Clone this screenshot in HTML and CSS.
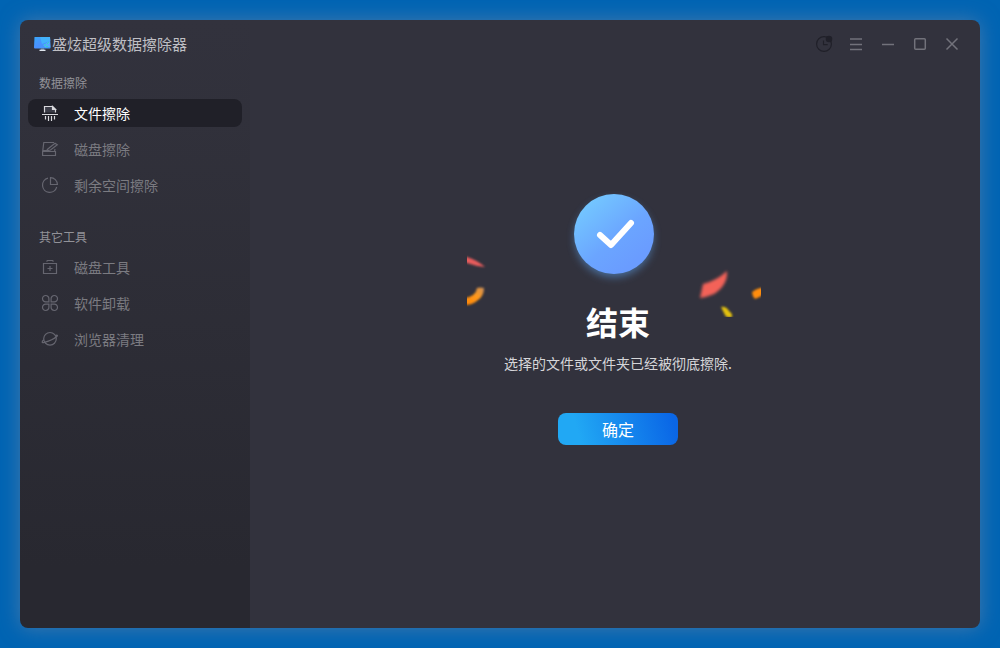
FILE: index.html
```html
<!DOCTYPE html>
<html lang="zh-CN">
<head>
<meta charset="utf-8">
<meta name="viewport" content="width=device-width, initial-scale=1">
<title>盛炫超级数据擦除器</title>
<link rel="stylesheet" href="styles.css">
</head>
<body>
<div class="window">
  <header class="titlebar">
    <div class="brand">
      <svg class="logo" width="17" height="16" viewBox="0 0 17 16" aria-hidden="true">
        <defs>
          <linearGradient id="screen" x1="0" y1="0" x2="1" y2="1">
            <stop offset="0" stop-color="#38a8fa"/><stop offset=".5" stop-color="#4a90ff"/><stop offset="1" stop-color="#3b9cf5"/>
          </linearGradient>
        </defs>
        <path d="M.5 1h15.500l.6 10.500q0 1-1 1H1q-1 0-1-1z" fill="url(#screen)"/>
        <path d="M6 1h10l.3 4L8 8z" fill="#43b2fb"/>
        <path d="M9 9l7-4 .3 6-5 .5z" fill="#55a9ff"/>
        <path d="M10 9h2M13 8l2-2M12 10.500h2" stroke="#2fd6c4" stroke-width="1"/>
        <path d="M7 12.500h3l.5 1.500h-4z" fill="#7d91a8"/>
        <path d="M5.500 14.300h6" stroke="#e1e7ef" stroke-width="1.200"/>
      </svg>
      <span class="name">盛炫超级数据擦除器</span>
    </div>
    <div class="controls">
      <button class="control dark" type="button" aria-label="历史记录">
        <svg width="16" height="16" viewBox="0 0 16 16"><circle cx="8" cy="8" r="7.400"/><path d="M7.500 4.500v4.200h4.200"/><circle class="dot" cx="13" cy="3" r="3.300"/></svg>
      </button>
      <button class="control" type="button" aria-label="菜单">
        <svg width="16" height="16" viewBox="0 0 16 16"><path d="M2 3h12M2 8.500h12M2 13.500h12"/></svg>
      </button>
      <button class="control" type="button" aria-label="最小化">
        <svg width="16" height="16" viewBox="0 0 16 16"><path d="M2 8.500h12"/></svg>
      </button>
      <button class="control" type="button" aria-label="最大化">
        <svg width="16" height="16" viewBox="0 0 16 16"><rect x="2.700" y="2.700" width="10.600" height="10.600" rx="1"/></svg>
      </button>
      <button class="control" type="button" aria-label="关闭">
        <svg width="16" height="16" viewBox="0 0 16 16"><path d="M2.500 2.500l11 11M13.500 2.500l-11 11"/></svg>
      </button>
    </div>
  </header>

  <nav class="sidebar">
    <section class="group">
      <h2 class="group-title">数据擦除</h2>
      <ul class="menu">
        <li><a class="item active" href="#file" aria-current="page">
          <svg width="16" height="16" viewBox="0 0 16 16" aria-hidden="true"><path fill="#3b3c47" d="M2.500 7.500v-6h8l3 3v3"/><path d="M10.500 1.500v3h3z" fill="#d8d8dc"/><path d="M0 9.500h16M3.500 11v3.500M6.500 11v5M9.500 11v5M12.500 11v3.500"/></svg>
          <span>文件擦除</span></a></li>
        <li><a class="item" href="#disk">
          <svg width="16" height="16" viewBox="0 0 16 16" aria-hidden="true"><path d="M12 1.500H1.800L.8 9.500h4M12.500 10l.6-2M.6 10.500h12.900v4H.6zM5.800 8l7.200-5.800 2.300 1.500L8.500 9l-4 .8z"/></svg>
          <span>磁盘擦除</span></a></li>
        <li><a class="item" href="#free-space">
          <svg width="16" height="16" viewBox="0 0 16 16" aria-hidden="true"><path d="M6 1.200A7.200 7.200 0 1 0 14.700 10"/><path d="M8.500.6A7 7 0 0 1 15.400 7.500H8.500z"/></svg>
          <span>剩余空间擦除</span></a></li>
      </ul>
    </section>
    <section class="group">
      <h2 class="group-title">其它工具</h2>
      <ul class="menu">
        <li><a class="item" href="#disk-tools">
          <svg width="16" height="16" viewBox="0 0 16 16" aria-hidden="true"><path d="M1.500 4.500h13v10h-13zM4.500 2.500L5.500 1.500h5l1 1M8 7v5M5.500 9.500h5"/></svg>
          <span>磁盘工具</span></a></li>
        <li><a class="item" href="#uninstall">
          <svg width="16" height="16" viewBox="0 0 16 16" aria-hidden="true"><path d="M6.900 6.900H3.800A3.200 3.200 0 1 1 6.900 3.800zM9.100 6.900V3.800A3.200 3.200 0 1 1 12.200 6.900zM6.900 9.100v3.100A3.200 3.200 0 1 1 3.800 9.100zM9.100 9.100h3.100A3.200 3.200 0 1 1 9.100 12.200z"/></svg>
          <span>软件卸载</span></a></li>
        <li><a class="item" href="#browser">
          <svg width="16" height="16" viewBox="0 0 16 16" aria-hidden="true"><circle cx="8" cy="7.800" r="6.300"/><path d="M1.800 8.800C-.5 10.800-.5 12.200 2.500 11.400 7 10.200 12 8 15 5.300c1-1.100.2-1.500-1.700-.8"/></svg>
          <span>浏览器清理</span></a></li>
      </ul>
    </section>
  </nav>

  <main class="result">
    <svg class="artwork" width="294" height="126" viewBox="0 0 294 126" aria-hidden="true">
      <defs>
        <linearGradient id="disc" x1=".15" y1=".15" x2=".75" y2=".85">
          <stop offset="0" stop-color="#73c5ff"/><stop offset=".6" stop-color="#6ba5ff"/><stop offset="1" stop-color="#6a9cff"/>
        </linearGradient>
        <linearGradient id="curl" x1="0" y1="1" x2="1" y2="0">
          <stop offset="0" stop-color="#ff8400"/><stop offset=".55" stop-color="#ff981c"/><stop offset="1" stop-color="#cb905a"/>
        </linearGradient>
        <filter id="glow" x="-30%" y="-30%" width="160%" height="160%"><feGaussianBlur stdDeviation="4"/></filter>
        <filter id="soft" x="-50%" y="-50%" width="200%" height="200%"><feGaussianBlur stdDeviation="1.700"/></filter>
        <filter id="fine" x="-50%" y="-50%" width="200%" height="200%"><feGaussianBlur stdDeviation=".8"/></filter>
        <clipPath id="frame"><rect width="294" height="123"/></clipPath>
      </defs>
      <circle cx="147" cy="44" r="39" fill="#5b9be0" opacity=".6" filter="url(#glow)"/>
      <circle cx="147" cy="40" r="40" fill="url(#disc)"/>
      <path d="M133 41l11 10L164 29" fill="none" stroke="#fff" stroke-width="6" stroke-linecap="round" stroke-linejoin="round"/>
      <g clip-path="url(#frame)">
        <path d="M-4 62l4 1q10 3 18 10Q8 72 0 69l-4-1z" fill="#e85c5c" filter="url(#fine)"/>
        <path d="M10 94q3-1 7 0 0 8-6 12-5 5-13 5v-7q11-2 12-10z" fill="url(#curl)" filter="url(#fine)"/>
        <path d="M260 77Q261 91 247 100q-7 3-14 4l3-14q13-3 24-13z" fill="#f36259" filter="url(#soft)"/>
        <path d="M254 113q5-1 8 4 4 3 3 6-6 2-8-4z" fill="#e3c10b" filter="url(#fine)"/>
        <path d="M285 98q4-3 8-4h4v6q-5 4-9 5-3-3-3-7z" fill="#ff8d09" filter="url(#fine)"/>
      </g>
    </svg>
    <h1 class="headline">结束</h1>
    <p class="message">选择的文件或文件夹已经被彻底擦除.</p>
    <button class="confirm" type="button">确定</button>
  </main>
</div>
</body>
</html>
```
FILE: styles.css
```css
* {
  box-sizing: border-box;
}

body {
  margin: 0;
  min-height: 100vh;
  padding: 20px;
  display: flex;
  background: #0064b3;
  font-family: "Noto Sans CJK SC", sans-serif;
  font-size: 14px;
}

.window {
  flex: 1;
  display: grid;
  grid-template-columns: 230px 1fr;
  grid-template-rows: 48px 1fr;
  overflow: hidden;
  border-radius: 8px;
  background:
    linear-gradient(#32323d, #31313b 16%, #282830 90%) 0 0 / 230px 100% no-repeat,
    #32323d;
  box-shadow: 0 0 20px rgba(95, 130, 170, 0.7);
}

.titlebar {
  grid-column: 1 / -1;
  display: flex;
  align-items: center;
  justify-content: space-between;
  padding: 0 16px 0 14px;
}

.brand {
  display: flex;
  align-items: center;
  gap: 1px;
}

.name {
  color: #bfbfc4;
  font-size: 15px;
  line-height: 20px;
}

.controls {
  display: flex;
  gap: 8px;
}

.control {
  width: 24px;
  height: 24px;
  padding: 4px;
  border: 0;
  background: none;
  color: #72727b;
}

.control svg {
  display: block;
  overflow: visible;
  fill: none;
  stroke: currentColor;
  stroke-width: 1.5;
}

.control.dark {
  color: #202029;
}

.control.dark svg {
  stroke-width: 1.2;
}

.control .dot {
  fill: currentColor;
  stroke: none;
}

.sidebar {
  display: flex;
  flex-direction: column;
  gap: 30px;
  padding: 7px 8px;
}

.group-title {
  margin: 0 0 8px;
  padding-left: 11px;
  color: #929298;
  font-size: 12px;
  font-weight: 400;
  line-height: 16px;
}

.menu {
  display: flex;
  flex-direction: column;
  gap: 8px;
  margin: 0;
  padding: 0;
  list-style: none;
}

.item {
  display: flex;
  align-items: center;
  gap: 16px;
  height: 28px;
  padding: 0 14px;
  border-radius: 8px;
  color: #7b7b81;
  line-height: 28px;
  text-decoration: none;
}

.item svg {
  overflow: visible;
  fill: none;
  stroke: #666670;
  stroke-width: 1.2;
}

.item.active {
  background: #202028;
  color: #fff;
}

.item.active svg {
  stroke: #d8d8dc;
}

.result {
  display: flex;
  flex-direction: column;
  align-items: center;
  padding: 126px 0 0 6px;
}

.artwork {
  margin-right: 8px;
  overflow: visible;
}

.headline {
  margin: -19px 0 0;
  color: #fff;
  font-size: 32px;
  font-weight: 700;
  line-height: 40px;
}

.message {
  margin: 12px 0 40px;
  color: #d6d6d9;
  line-height: 20px;
}

.confirm {
  width: 120px;
  height: 32px;
  padding: 0;
  border: 0;
  border-radius: 8px;
  background: linear-gradient(75deg, #21a8f4 18%, #0a66e6 95%);
  color: #fff;
  font: inherit;
  font-size: 16px;
}
```
